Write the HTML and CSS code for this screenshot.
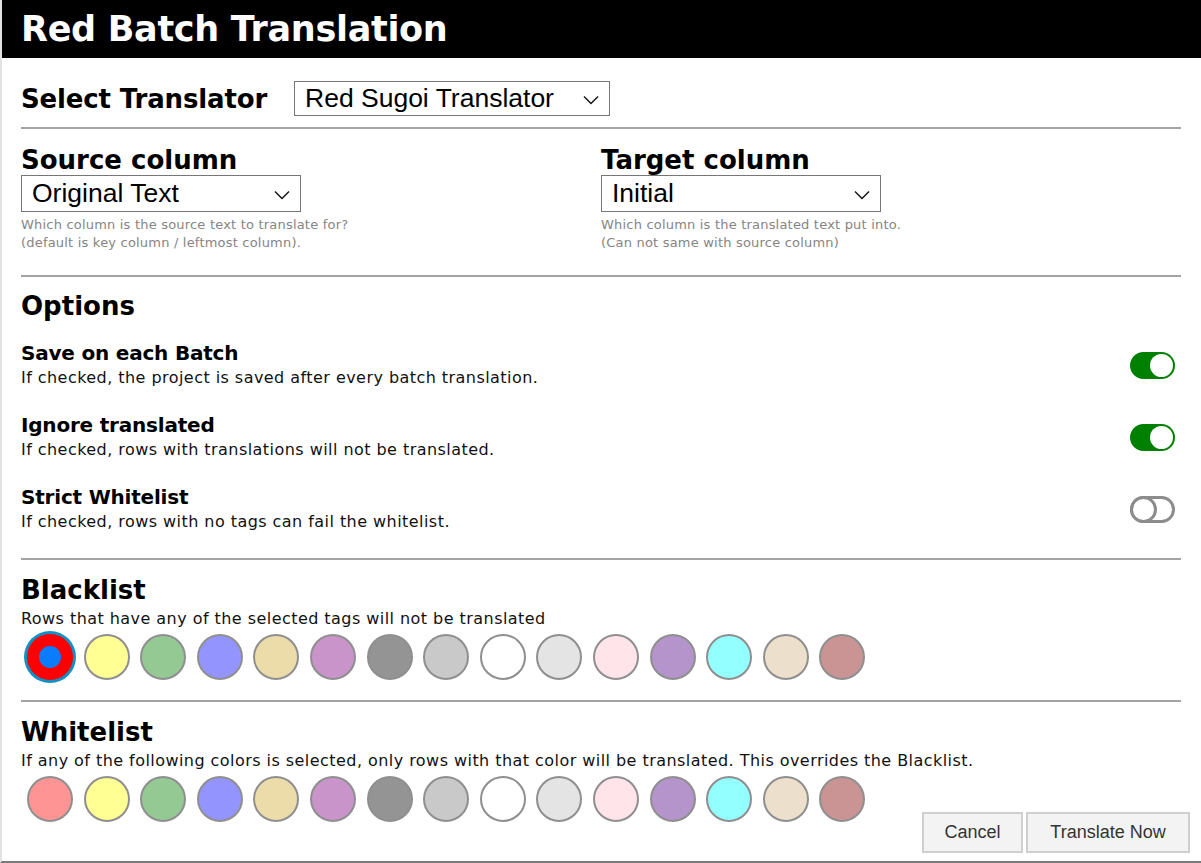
FILE: index.html
```html
<!DOCTYPE html>
<html lang="en">
<head>
<meta charset="utf-8">
<title>Red Batch Translation</title>
<link rel="stylesheet" href="styles.css">
</head>
<body>
<div class="dialog">
  <header class="titlebar"><h1>Red Batch Translation</h1></header>
  <main class="content">
    <section class="translator-row">
      <h2 class="label">Select Translator</h2>
      <div class="select select-translator">
        <span>Red Sugoi Translator</span>
        <svg class="chevron" viewBox="0 0 16 10" width="16" height="10"><path d="M1 1.5 L8 8.5 L15 1.5" fill="none" stroke="#111" stroke-width="1.4"/></svg>
      </div>
    </section>
    <hr class="rule">
    <section class="columns">
      <div class="col">
        <h2 class="heading">Source column</h2>
        <div class="select select-col">
          <span>Original Text</span>
          <svg class="chevron" viewBox="0 0 16 10" width="16" height="10"><path d="M1 1.5 L8 8.5 L15 1.5" fill="none" stroke="#111" stroke-width="1.4"/></svg>
        </div>
        <p class="help">Which column is the source text to translate for?<br>(default is key column / leftmost column).</p>
      </div>
      <div class="col">
        <h2 class="heading">Target column</h2>
        <div class="select select-col">
          <span>Initial</span>
          <svg class="chevron" viewBox="0 0 16 10" width="16" height="10"><path d="M1 1.5 L8 8.5 L15 1.5" fill="none" stroke="#111" stroke-width="1.4"/></svg>
        </div>
        <p class="help">Which column is the translated text put into.<br>(Can not same with source column)</p>
      </div>
    </section>
    <hr class="rule">
    <section class="options">
      <h2 class="heading">Options</h2>
      <div class="option">
        <div class="option-text">
          <h3>Save on each Batch</h3>
          <p>If checked, the project is saved after every batch translation.</p>
        </div>
        <span class="toggle on"><span class="knob"></span></span>
      </div>
      <div class="option">
        <div class="option-text">
          <h3>Ignore translated</h3>
          <p>If checked, rows with translations will not be translated.</p>
        </div>
        <span class="toggle on"><span class="knob"></span></span>
      </div>
      <div class="option">
        <div class="option-text">
          <h3>Strict Whitelist</h3>
          <p>If checked, rows with no tags can fail the whitelist.</p>
        </div>
        <span class="toggle off"><span class="knob"></span></span>
      </div>
    </section>
    <hr class="rule">
    <section class="taglist">
      <h2 class="heading">Blacklist</h2>
      <p class="desc">Rows that have any of the selected tags will not be translated</p>
      <div class="swatches">
        <span class="swatch selected"></span>
        <span class="swatch c-yellow"></span>
        <span class="swatch c-green"></span>
        <span class="swatch c-blue"></span>
        <span class="swatch c-tan"></span>
        <span class="swatch c-purple"></span>
        <span class="swatch c-gray"></span>
        <span class="swatch c-silver"></span>
        <span class="swatch c-white"></span>
        <span class="swatch c-light"></span>
        <span class="swatch c-pink"></span>
        <span class="swatch c-lavender"></span>
        <span class="swatch c-cyan"></span>
        <span class="swatch c-beige"></span>
        <span class="swatch c-rose"></span>
      </div>
    </section>
    <hr class="rule">
    <section class="taglist">
      <h2 class="heading">Whitelist</h2>
      <p class="desc">If any of the following colors is selected, only rows with that color will be translated. This overrides the Blacklist.</p>
      <div class="swatches">
        <span class="swatch c-red"></span>
        <span class="swatch c-yellow"></span>
        <span class="swatch c-green"></span>
        <span class="swatch c-blue"></span>
        <span class="swatch c-tan"></span>
        <span class="swatch c-purple"></span>
        <span class="swatch c-gray"></span>
        <span class="swatch c-silver"></span>
        <span class="swatch c-white"></span>
        <span class="swatch c-light"></span>
        <span class="swatch c-pink"></span>
        <span class="swatch c-lavender"></span>
        <span class="swatch c-cyan"></span>
        <span class="swatch c-beige"></span>
        <span class="swatch c-rose"></span>
      </div>
    </section>
  </main>
  <footer class="actions">
    <button class="btn btn-cancel">Cancel</button>
    <button class="btn btn-go">Translate Now</button>
  </footer>
</div>
</body>
</html>
```

FILE: styles.css
```css
* { box-sizing: border-box; }
html, body { margin: 0; padding: 0; background: #fff; }
body {
  font-family: "DejaVu Sans", "Liberation Sans", sans-serif;
  color: #000;
}
.dialog {
  position: relative;
  width: 1201px;
  height: 863px;
  border-left: 2px solid #e2e2e2;
  border-bottom: 2px solid #7a7a7a;
  overflow: hidden;
}
.titlebar {
  background: #000;
  height: 58px;
  margin-left: -2px;
  padding-left: 21px;
}
.titlebar h1 {
  margin: 0;
  color: #fff;
  font-size: 35px;
  line-height: 59px;
  font-weight: bold;
  letter-spacing: -0.3px;
}
.content {
  padding: 0 20px 0 19px;
}
.translator-row {
  display: flex;
  align-items: center;
  margin-top: 23px;
  height: 35px;
}
.label {
  margin: 0;
  font-size: 26px;
  line-height: 30px;
  font-weight: bold;
  letter-spacing: -0.15px;
  width: 273px;
}
.select {
  display: flex;
  align-items: center;
  justify-content: space-between;
  border: 1px solid #767676;
  background: #fff;
  font-family: "Liberation Sans", Arial, sans-serif;
  color: #000;
  padding: 0 10px 0 10px;
}
.select-translator {
  width: 316px;
  height: 35px;
  font-size: 26.5px;
}
.select-col {
  width: 280px;
  height: 37px;
  font-size: 26.5px;
}
.chevron { flex: none; margin-top: 2px; }
.rule {
  margin: 11px 0 0 0;
  border: 0;
  border-top: 2px solid #a3a3a3;
  height: 0;
}
.columns {
  display: grid;
  grid-template-columns: 580px 1fr;
  margin-top: 16px;
}
.heading {
  margin: 0;
  font-size: 26px;
  line-height: 30px;
  font-weight: bold;
}
.help {
  margin: 4px 0 0 0;
  font-size: 13px;
  line-height: 18px;
  letter-spacing: 0.2px;
  color: #858585;
}
.columns + .rule { margin-top: 23px; }
.options { margin-top: 14px; }
.option {
  display: flex;
  align-items: center;
  justify-content: space-between;
  margin-top: 20px;
}
.option + .option { margin-top: 23px; }
.option h3 {
  margin: 0;
  font-size: 20px;
  line-height: 24px;
  letter-spacing: -0.2px;
  font-weight: bold;
}
.option p {
  margin: 1px 0 0 0;
  font-size: 16px;
  line-height: 24px;
  letter-spacing: 0.45px;
  color: #111;
}
.options + .rule { margin-top: 24px; }
.toggle {
  position: relative;
  display: inline-block;
  width: 45px;
  height: 27px;
  border-radius: 14px;
  margin-right: 6px;
}
.toggle.on { background: #008000; }
.toggle.on .knob {
  position: absolute;
  right: 2px;
  top: 2px;
  width: 23px;
  height: 23px;
  border-radius: 50%;
  background: #fff;
}
.toggle.off {
  border: 3px solid #8c8c8c;
  background: #fff;
}
.toggle.off .knob {
  position: absolute;
  left: -3px;
  top: -3px;
  width: 27px;
  height: 27px;
  border-radius: 50%;
  border: 3px solid #8c8c8c;
  background: #fff;
}
.taglist { margin-top: 15px; }
.desc {
  margin: 3px 0 0 0;
  font-size: 16px;
  line-height: 22px;
  letter-spacing: 0.45px;
  color: #111;
}
.swatches {
  display: flex;
  gap: 10.6px;
  margin-top: 4px;
  padding-left: 6px;
}
.swatch {
  flex: none;
  width: 46px;
  height: 46px;
  border-radius: 50%;
  border: 2px solid #8f8f8f;
  background: #fff;
}
.swatch.selected {
  background: #0a7cff;
  border: 12px solid #ff0000;
  box-shadow: 0 0 0 3px #1190c3;
}
.taglist + .rule { margin-top: 20px; }
.c-red { background: #ff9494; }
.c-yellow { background: #ffff94; }
.c-green { background: #94c994; }
.c-blue { background: #9494ff; }
.c-tan { background: #ecdcaa; }
.c-purple { background: #c994c9; }
.c-gray { background: #949494; }
.c-silver { background: #c9c9c9; }
.c-white { background: #ffffff; }
.c-light { background: #e4e4e4; }
.c-pink { background: #ffe4ea; }
.c-lavender { background: #b494ca; }
.c-cyan { background: #94ffff; }
.c-beige { background: #ecdfcc; }
.c-rose { background: #ca9494; }
.actions {
  position: absolute;
  right: 11px;
  bottom: 8px;
  display: flex;
  gap: 3px;
}
.btn {
  height: 41px;
  border: 2px solid #cfcfcf;
  background: #f3f3f3;
  font-family: "Liberation Sans", Arial, sans-serif;
  font-size: 18px;
  color: #333;
  padding: 0 18px;
}
.btn-cancel { width: 101px; }
.btn-go { width: 164px; }
```
